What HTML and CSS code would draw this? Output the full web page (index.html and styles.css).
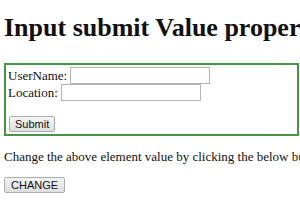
FILE: index.html
```html
<!DOCTYPE html>
<html>
<head>
<meta charset="utf-8">
<link rel="stylesheet" href="styles.css">
</head>
<body>
<h1 class="title">Input submit Value property</h1>
<form class="box">
  <div class="row"><span>UserName:</span><input class="field" type="text"></div>
  <div class="row"><span>Location:</span><input class="field" type="text"></div>
  <div class="spacer"></div>
  <input class="btn" type="submit" value="Submit">
</form>
<p class="note">Change the above element value by clicking the below button</p>
<button class="btn change" type="button">CHANGE</button>
</body>
</html>
```

FILE: styles.css
```css
html, body {
  margin: 0;
  background: #ffffff;
}
body {
  padding: 0 4px;
  font-family: "Liberation Serif", "Times New Roman", serif;
  font-size: 13px;
  color: #111111;
  overflow: hidden;
  width: 300px;
  box-sizing: border-box;
}
.title {
  margin: 13px 0 20px;
  font-size: 26px;
  line-height: 30px;
  font-weight: bold;
  white-space: nowrap;
  color: #111111;
}
.box {
  width: 295px;
  box-sizing: border-box;
  border: 2px solid #449644;
  padding: 2px 2px 2px;
  margin: 0;
}
.row {
  display: flex;
  align-items: center;
  gap: 3px;
  height: 17px;
}
.field {
  width: 140px;
  height: 17px;
  box-sizing: border-box;
  border: 1px solid #b4b4b4;
  padding: 0;
  margin: 0;
  background: #ffffff;
}
.spacer {
  height: 15px;
}
.btn {
  display: block;
  height: 16px;
  box-sizing: border-box;
  margin: 0;
  padding: 0 5px;
  font-family: "Liberation Sans", Arial, sans-serif;
  font-size: 11px;
  line-height: 14px;
  color: #111111;
  border: 1px solid #adadad;
  border-radius: 2px;
  background: linear-gradient(#f4f4f4, #dedede);
}
.box .btn {
  margin-left: 1px;
}
.note {
  margin: 13px 0 12px;
  white-space: nowrap;
}
.change {
  padding: 0 6px;
}
```
